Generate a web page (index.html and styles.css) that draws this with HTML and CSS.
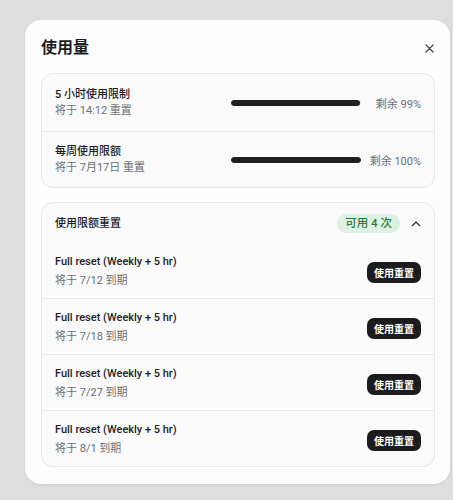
FILE: index.html
```html
<!DOCTYPE html>
<html lang="zh-CN">
<head>
<meta charset="utf-8">
<meta name="viewport" content="width=device-width, initial-scale=1">
<title>使用量</title>
<link rel="stylesheet" href="styles.css">
</head>
<body>
	<div class="modal">
		<div class="modal-head">
			<h2 class="modal-title">使用量</h2>
			<button class="close" aria-label="关闭">
				<svg width="9" height="9" viewBox="0 0 9 9"><path d="M1 1 L8 8 M8 1 L1 8" stroke="#444" stroke-width="1.3" stroke-linecap="round" fill="none"/></svg>
			</button>
		</div>

		<div class="card">
			<div class="limit-row">
				<div class="info">
					<div class="name">5 小时使用限制</div>
					<div class="sub">将于 14:12 重置</div>
				</div>
				<div class="meter">
					<div class="bar"><div class="fill" style="width:99%"></div></div>
					<div class="left">剩余 99%</div>
				</div>
			</div>
			<div class="limit-row">
				<div class="info">
					<div class="name">每周使用限额</div>
					<div class="sub">将于 7月17日 重置</div>
				</div>
				<div class="meter">
					<div class="bar"><div class="fill" style="width:100%"></div></div>
					<div class="left">剩余 100%</div>
				</div>
			</div>
		</div>

		<div class="card resets">
			<div class="resets-head">
				<div class="name">使用限额重置</div>
				<span class="badge">可用 4 次</span>
				<svg class="chevron" width="12" height="12" viewBox="0 0 12 12"><path d="M2.5 7.5 L6 4 L9.5 7.5" stroke="#333" stroke-width="1.3" stroke-linecap="round" stroke-linejoin="round" fill="none"/></svg>
			</div>
			<div class="reset-row">
				<div class="info">
					<div class="name">Full reset (Weekly + 5 hr)</div>
					<div class="sub">将于 7/12 到期</div>
				</div>
				<button class="use-btn">使用重置</button>
			</div>
			<div class="reset-row">
				<div class="info">
					<div class="name">Full reset (Weekly + 5 hr)</div>
					<div class="sub">将于 7/18 到期</div>
				</div>
				<button class="use-btn">使用重置</button>
			</div>
			<div class="reset-row">
				<div class="info">
					<div class="name">Full reset (Weekly + 5 hr)</div>
					<div class="sub">将于 7/27 到期</div>
				</div>
				<button class="use-btn">使用重置</button>
			</div>
			<div class="reset-row">
				<div class="info">
					<div class="name">Full reset (Weekly + 5 hr)</div>
					<div class="sub">将于 8/1 到期</div>
				</div>
				<button class="use-btn">使用重置</button>
			</div>
		</div>
	</div>
</body>
</html>
```

FILE: styles.css
```css
* {
	box-sizing: border-box;
}
html, body {
	margin: 0;
	padding: 0;
}
body {
	background: #dedede;
	padding: 20px 3px 0 25px;
	font-family: "Roboto", "Noto Sans CJK SC", sans-serif;
	color: #1d1d1f;
	height: 500px;
	overflow: hidden;
}

.modal {
	width: 425px;
	background: #fdfdfd;
	border-radius: 16px;
	padding: 16px 15px 17px 16px;
	box-shadow: 0 1px 3px rgba(0, 0, 0, 0.08);
}
.modal-head {
	display: flex;
	align-items: center;
	justify-content: space-between;
	height: 24px;
	margin-bottom: 13px;
}
.modal-title {
	margin: 0;
	font-size: 16px;
	font-weight: 600;
	line-height: 24px;
}
.close {
	border: none;
	background: none;
	padding: 0;
	width: 9px;
	height: 9px;
	display: flex;
	margin-right: 1px;
}

.card {
	border: 1px solid #e8e8e8;
	border-radius: 12px;
	background: #fafafa;
}
.card + .card {
	margin-top: 14px;
}

.name {
	font-size: 11px;
	font-weight: 500;
	line-height: 16px;
	color: #1d1d1f;
}
.sub {
	font-size: 11px;
	line-height: 16px;
	color: #6e6e73;
}

.limit-row {
	display: flex;
	align-items: center;
	justify-content: space-between;
	padding: 13px 13px 12px 13px;
}
.limit-row + .limit-row {
	border-top: 1px solid #e9e9e9;
	padding: 12px 13px 11px 13px;
}
.meter {
	display: flex;
	align-items: center;
	width: 190px;
}
.bar {
	width: 130px;
	height: 6px;
	border-radius: 3px;
	background: #e5e5e5;
	overflow: hidden;
}
.fill {
	height: 100%;
	background: #1f1f21;
	border-radius: 3px;
}
.left {
	flex: 1;
	text-align: right;
	font-size: 11px;
	color: #6e6e73;
	white-space: nowrap;
}

.resets-head {
	display: flex;
	align-items: center;
	height: 40px;
	padding: 1px 12px 0 13px;
}
.resets-head .name {
	flex: 1;
}
.badge {
	background: #dcf1e2;
	color: #2c7a43;
	font-size: 11.5px;
	font-weight: 500;
	line-height: 19px;
	padding: 0 8px;
	border-radius: 10px;
	margin-right: 10px;
}
.chevron {
	display: block;
}

.reset-row {
	display: flex;
	align-items: center;
	justify-content: space-between;
	padding: 10px 13px 8px 13px;
}
.reset-row + .reset-row {
	border-top: 1px solid #e9e9e9;
}
.reset-row .name,
.reset-row .sub {
	line-height: 18px;
}
.reset-row .sub {
	margin-top: 1px;
}
.use-btn {
	border: none;
	background: #1c1c1e;
	color: #fff;
	font-family: "Roboto", "Noto Sans CJK SC", sans-serif;
	font-size: 10px;
	font-weight: 700;
	height: 21px;
	padding: 0 7px;
	border-radius: 7px;
	margin-top: 1px;
}
```
